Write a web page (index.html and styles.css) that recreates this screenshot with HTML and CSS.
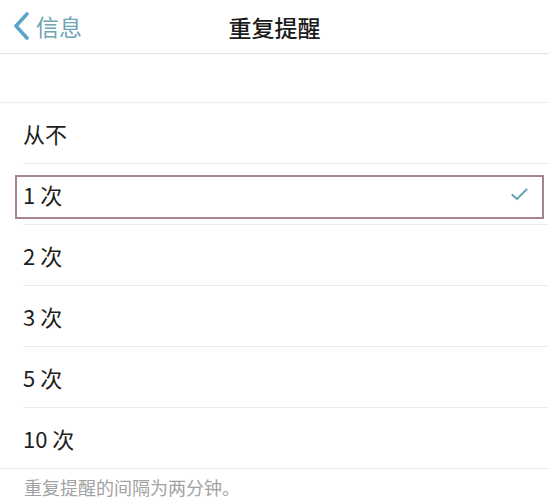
FILE: index.html
```html
<!DOCTYPE html>
<html lang="zh-CN">
<head>
<meta charset="utf-8">
<title>重复提醒</title>
<link rel="stylesheet" href="styles.css">
</head>
<body>
<div class="page">
  <header class="nav">
    <div class="back">
      <svg class="chev" width="18" height="28" viewBox="0 0 18 28"><path d="M15 2 L4 14 L15 26" fill="none" stroke="#5aa6c8" stroke-width="3.6" stroke-linecap="round" stroke-linejoin="round"/></svg>
      <span class="back-text">信息</span>
    </div>
    <div class="title">重复提醒</div>
  </header>
  <div class="spacer"></div>
  <ul class="list">
    <li class="row"><span class="label">从不</span></li>
    <li class="row selected">
      <span class="label">1 次</span>
      <svg class="check" width="17" height="13" viewBox="0 0 17 13"><path d="M1.5 7 L6 11 L15.5 1.5" fill="none" stroke="#6aa9b3" stroke-width="2.2" stroke-linecap="round" stroke-linejoin="round"/></svg>
      <span class="highlight"></span>
    </li>
    <li class="row"><span class="label">2 次</span></li>
    <li class="row"><span class="label">3 次</span></li>
    <li class="row"><span class="label">5 次</span></li>
    <li class="row last"><span class="label">10 次</span></li>
  </ul>
  <p class="note">重复提醒的间隔为两分钟。</p>
</div>
</body>
</html>
```
FILE: styles.css
```css
html, body {
  margin: 0;
  padding: 0;
  background: #ffffff;
}
body {
  font-family: "Noto Sans CJK SC", "Noto Sans", sans-serif;
  color: #1e1e1e;
}
.page {
  width: 549px;
  height: 500px;
  overflow: hidden;
}
.nav {
  height: 53px;
  border-bottom: 1px solid #e4e4e4;
  display: flex;
  align-items: center;
  justify-content: center;
  position: relative;
}
.back {
  position: absolute;
  left: 12px;
  top: 11px;
  display: flex;
  align-items: center;
  gap: 6px;
}
.chev {
  display: block;
}
.back-text {
  font-size: 23px;
  line-height: 30px;
  color: #6ea4b6;
}
.title {
  font-size: 23px;
  font-weight: 500;
  line-height: 30px;
  color: #1a1a1a;
}
.spacer {
  height: 48px;
  border-bottom: 1px solid #eeeeee;
}
.list {
  list-style: none;
  margin: 0;
  padding: 0;
}
.row {
  height: 60px;
  margin-left: 23px;
  padding-right: 21px;
  border-bottom: 1px solid #ececec;
  display: flex;
  align-items: center;
  justify-content: space-between;
  position: relative;
}
.row.last {
  margin-left: 0;
  padding-left: 23px;
}
.label {
  font-size: 22px;
  line-height: 30px;
  color: #1e1e1e;
}
.check {
  display: block;
}
.highlight {
  position: absolute;
  left: -8px;
  right: 5px;
  top: 11px;
  bottom: 5px;
  border: 2px solid #a7838f;
  pointer-events: none;
}
.note {
  margin: 0;
  padding: 7px 0 0 24px;
  font-size: 18px;
  line-height: 22px;
  color: #a2a2a2;
}
```
